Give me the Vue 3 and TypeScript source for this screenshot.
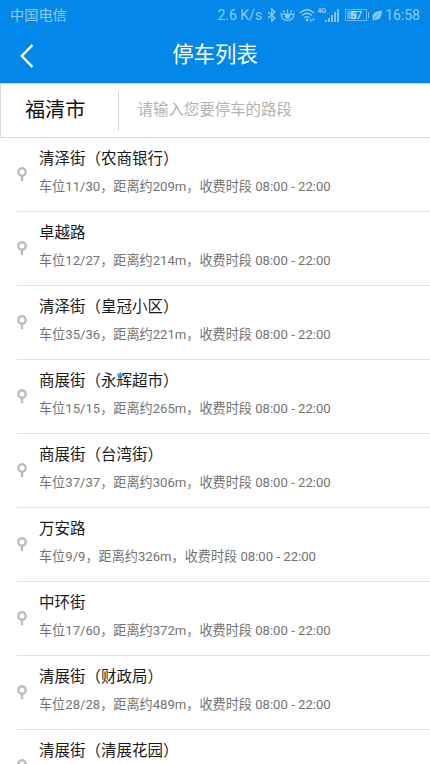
<script setup lang="ts">
interface ParkingRoad {
  name: string
  spaces?: string
  distance?: number
}

const roads: ParkingRoad[] = [
  { name: '清泽街（农商银行）', spaces: '11/30', distance: 209 },
  { name: '卓越路', spaces: '12/27', distance: 214 },
  { name: '清泽街（皇冠小区）', spaces: '35/36', distance: 221 },
  { name: '商展街（永辉超市）', spaces: '15/15', distance: 265 },
  { name: '商展街（台湾街）', spaces: '37/37', distance: 306 },
  { name: '万安路', spaces: '9/9', distance: 326 },
  { name: '中环街', spaces: '17/60', distance: 372 },
  { name: '清展街（财政局）', spaces: '28/28', distance: 489 },
  { name: '清展街（清展花园）' },
]
</script>

<template>
  <div class="screen">
    <header class="header">
      <div class="status">
        <span class="carrier">中国电信</span>
        <span class="speed">2.6 K/s</span>
        <svg class="bluetooth" width="10" height="14" viewBox="0 0 10 14">
          <path d="M1 4l7 6-3.2 3V1L8 4 1 10" />
        </svg>
        <svg class="eye" width="15" height="14" viewBox="0 0 15 14">
          <path d="M1.2 4.6Q.6 12.4 7.5 12.4T13.8 4.6M2 6.6Q4 6.2 5.4 5.4M13 6.6Q11 6.2 9.6 5.4M7.5 4.6V1.4M4.4 4.4L3.2 2.4M10.6 4.4L11.8 2.4" />
          <circle class="solid" cx="7.5" cy="8" r="2.1" />
        </svg>
        <svg class="wifi" width="16" height="14" viewBox="0 0 16 14">
          <path d="M1 5Q8-1.5 15 5M3.2 7.4Q8 3 12.8 7.4M5.4 9.8Q8 7.5 10.6 9.8" />
          <circle class="solid thin" cx="8" cy="12" r="1.4" />
          <path class="solid thin" d="M10.4 13.2l1.4-2.6 1.4 2.6zM13 10.6h2.8l-1.4 2.6z" />
        </svg>
        <span class="network">4G</span>
        <svg class="signal" width="14" height="13" viewBox="0 0 14 13">
          <path d="M1 13v-2M4 13V9M7 13V6M10 13V3M13 13V0" />
        </svg>
        <span class="battery"><span class="level">57</span></span>
        <svg class="leaf" width="10" height="11" viewBox="0 0 10 11">
          <path class="solid thin" d="M1.2 9.2C-1 4 3 1 10 .5 10 6.6 7.2 10.8 2.6 9.4L1.2 11 .3 10.3z" />
          <path class="vein" d="M2 8.6L6.6 4.2" />
        </svg>
        <span class="time">16:58</span>
      </div>
      <div class="nav">
        <button class="back" aria-label="返回">
          <svg width="14" height="24" viewBox="0 0 14 24">
            <path d="M12.4 1.2L1.8 12l10.6 10.8" />
          </svg>
        </button>
        <h1>停车列表</h1>
      </div>
    </header>

    <div class="search">
      <span class="city">福清市</span>
      <input type="text" placeholder="请输入您要停车的路段" />
    </div>

    <ul class="list">
      <li v-for="road in roads" :key="road.name" class="row">
        <svg class="pin" width="10" height="15" viewBox="0 0 10 15">
          <circle cx="5" cy="5" r="3.7" />
          <path d="M5 8.8v5.4" />
        </svg>
        <div class="info">
          <div class="name">{{ road.name }}</div>
          <div v-if="road.spaces" class="detail">车位{{ road.spaces }}，距离约{{ road.distance }}m，收费时段 08:00 - 22:00</div>
        </div>
      </li>
    </ul>
  </div>
</template>

<style>
body {
  margin: 0;
  overflow: hidden;
}
</style>

<style scoped>
.screen {
  width: 430px;
  height: 764px;
  overflow: hidden;
  background: #fff;
  font-family: Roboto, "Noto Sans CJK SC", sans-serif;
}

.header {
  height: 83px;
  background: #0388e9;
}

.status {
  display: flex;
  align-items: center;
  height: 30px;
  padding: 0 10px;
  color: #8dcbf6;
  font-size: 14px;
  line-height: 30px;
  white-space: nowrap;
}

.status svg {
  flex: none;
  fill: none;
  stroke: #8dcbf6;
  stroke-width: 1.3;
}

.status .solid {
  fill: #8dcbf6;
}

.status .thin {
  stroke: none;
}

.status .vein {
  stroke: #0388e9;
  stroke-width: 0.7;
}

.carrier {
  font-size: 14.2px;
}

.speed {
  margin-left: auto;
}

.bluetooth {
  margin-left: 5px;
}

.eye {
  margin-left: 3px;
}

.wifi {
  margin-left: 4px;
}

.network {
  align-self: flex-start;
  width: 9px;
  margin: 6px 0 0 2px;
  font-size: 7.5px;
  font-weight: 700;
  letter-spacing: -0.5px;
  line-height: 9px;
}

.status .signal {
  margin-left: -1px;
  stroke-width: 1.8;
}

.battery {
  position: relative;
  box-sizing: border-box;
  width: 22px;
  height: 12px;
  margin: 0 5px 0 6px;
  padding: 1px;
  border: 1px solid #6cb9f2;
}

.battery::after {
  content: "";
  position: absolute;
  top: 2px;
  right: -3px;
  width: 1.5px;
  height: 6px;
  background: #8dcbf6;
}

.level {
  display: block;
  height: 8px;
  background: linear-gradient(90deg, #55aff0 58%, transparent 58%);
  color: #d3ebfc;
  font-size: 11px;
  line-height: 9px;
  text-align: center;
}

.time {
  margin-left: 3px;
  font-size: 14px;
}

.nav {
  display: grid;
  grid-template-columns: 60px 1fr 60px;
  align-items: center;
  height: 50px;
}

.back {
  display: flex;
  padding: 2px 0 0 20px;
  border: 0;
  background: none;
}

.back svg {
  fill: none;
  stroke: #fff;
  stroke-width: 2.4;
}

h1 {
  margin: 0;
  color: #fff;
  font-size: 21.4px;
  font-weight: 400;
  line-height: 48px;
  text-align: center;
}

.search {
  display: flex;
  align-items: center;
  box-sizing: border-box;
  height: 55px;
  border: 1px solid #d9d9d9;
  border-top-color: #b5dbf7;
  border-right: 0;
}

.city {
  box-sizing: border-box;
  width: 118px;
  height: 40px;
  padding-left: 24px;
  border-right: 1px solid #d5d5d5;
  color: #111;
  font-size: 20.1px;
  line-height: 38px;
}

input {
  flex: 1;
  min-width: 0;
  height: 38px;
  margin: 0 0 2px;
  padding: 0 0 0 18.5px;
  border: 0;
  outline: 0;
  background: none;
  font: 15.45px Roboto, "Noto Sans CJK SC", sans-serif;
}

input::placeholder {
  color: #b2b2b2;
}

.list {
  margin: 0;
  padding: 0 0 0 17px;
  list-style: none;
}

.row {
  display: flex;
  box-sizing: border-box;
  height: 74px;
  border-bottom: 1px solid #e4e4e4;
}

.pin {
  flex: none;
  margin: 29px 12px 0 0;
  fill: none;
  stroke: #bcbcbc;
  stroke-width: 2.4;
}

.info {
  white-space: nowrap;
}

.name {
  margin-top: 9px;
  color: #1a1a1a;
  font-size: 15.5px;
  line-height: 24px;
}

.detail {
  margin-top: 6px;
  color: #737373;
  font-size: 13.13px;
  line-height: 20px;
}
</style>
